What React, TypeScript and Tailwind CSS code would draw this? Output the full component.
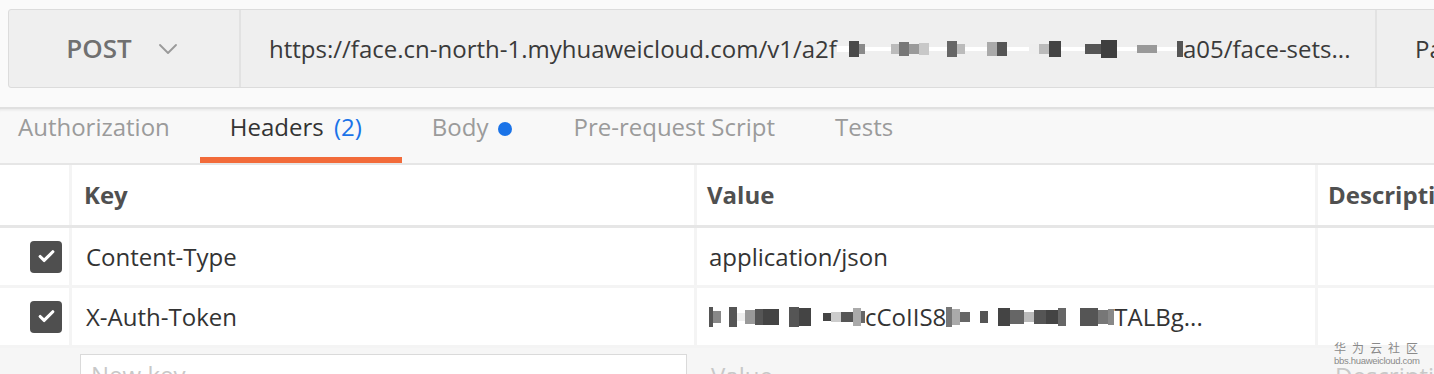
import { ChevronDown, Check } from 'lucide-react'

type Block = [number, string, number?]

// pixelated redaction blocks: [width, colour, height]
const URL_MASK: Block[] = [
  [12, '#fff', 6], [10, '#4a4a4a', 16], [6, '#8a8a8a', 10], [26, '#fff', 4], [8, '#bbb', 10], [10, '#777', 14], [10, '#9a9a9a', 10],
  [10, '#c8c8c8', 12], [18, '#fff', 4], [10, '#666', 16], [8, '#bbb', 10], [22, '#fff', 4], [10, '#aaa', 14], [10, '#555', 14],
  [22, '#fff', 4], [10, '#eee', 10], [10, '#bbb', 10], [12, '#444', 16], [24, '#fff', 4], [16, '#555', 10], [16, '#3f3f3f', 18],
  [20, '#fff', 4], [20, '#999', 8], [20, '#fff', 4], [6, '#555', 16],
]

const TOKEN_MASK: Block[] = [
  [4, '#555', 20], [8, '#888', 12], [8, '#fff', 4], [8, '#555', 20], [8, '#eee', 8], [10, '#999', 14], [8, '#555', 16],
  [16, '#444', 16], [10, '#fff', 4], [10, '#555', 20], [12, '#444', 18], [12, '#fff', 4], [8, '#444', 8], [10, '#ccc', 10],
  [12, '#555', 10], [8, '#aaa', 18], [4, '#666', 12],
]

const TOKEN_MASK2: Block[] = [
  [6, '#777', 20], [8, '#aaa', 16], [10, '#666', 10], [10, '#fff', 4], [8, '#555', 12], [10, '#fff', 4], [12, '#444', 18],
  [14, '#666', 14], [10, '#bbb', 10], [12, '#555', 14], [12, '#444', 14], [8, '#666', 18], [14, '#fff', 4], [18, '#555', 18],
  [10, '#777', 14], [6, '#888', 16],
]

function Mosaic({ blocks }: { blocks: Block[] }) {
  return (
    <span className="inline-flex items-center h-[22px] align-middle shrink-0">
      {blocks.map(([w, c, h], i) => (
        <span key={i} className="block" style={{ width: w, height: h ?? 14, background: c }} />
      ))}
    </span>
  )
}

function CheckBox() {
  return (
    <div className="w-[32px] h-[32px] rounded-[4px] bg-[#4f4f4f] flex items-center justify-center">
      <Check size={19} strokeWidth={4} className="text-white" />
    </div>
  )
}

export default function App() {
  return (
    <div className="w-[1434px] h-[374px] overflow-hidden bg-[#fafafa] text-[#333] font-['Open_Sans',sans-serif] relative">
      {/* request bar */}
      <div className="pt-[9px] pl-[8px] h-[107px]">
        <div className="flex h-[79px] w-[1480px] bg-[#efefef] border border-[#dcdcdc] rounded-[3px]">
          <div className="w-[232px] flex items-center justify-center gap-[20px] border-r-2 border-[#e2e2e2] shrink-0">
            <span className="text-[26px] font-semibold text-[#707070] ml-[2px]">POST</span>
            <ChevronDown size={32} strokeWidth={1.4} className="text-[#9a9a9a]" />
          </div>
          <div className="flex items-center pl-[28px] w-[1136px] border-r-2 border-[#e2e2e2] shrink-0 text-[24px] text-[#3a3a3a] whitespace-nowrap overflow-hidden">
            <span>https://face.cn-north-1.myhuaweicloud.com/v1/a2f</span>
            <Mosaic blocks={URL_MASK} />
            <span>a05/face-sets...</span>
          </div>
          <div className="flex items-center pl-[38px] text-[24px] text-[#3a3a3a]">Params</div>
        </div>
      </div>

      {/* tabs */}
      <div className="h-[56px] bg-[#f8f8f8] border-t-2 border-[#e0e0e0] shadow-[inset_0_3px_3px_-2px_rgba(0,0,0,0.08)] flex text-[24px] text-[#9b9b9b] whitespace-nowrap">
        <div className="pl-[18px] pr-[30px]">Authorization</div>
        <div className="w-[202px] pl-[30px] flex flex-col">
          <div className="text-[#333]">
            Headers <span className="text-[#1a73e8] ml-[4px]">(2)</span>
          </div>
          <div className="mt-auto ml-[-30px] h-[6px] bg-[#f26b3a]" />
        </div>
        <div className="pl-[30px] pr-[31px] flex items-start gap-[10px]">
          <span>Body</span>
          <span className="mt-[13px] w-[14px] h-[14px] rounded-full bg-[#1a73e8]" />
        </div>
        <div className="pl-[30px] pr-[30px]">Pre-request Script</div>
        <div className="pl-[30px]">Tests</div>
      </div>

      {/* table */}
      <div className="bg-white border-t-2 border-[#e6e6e6]">
        <div className="flex h-[63px] border-b-[3px] border-[#e6e6e6] text-[24px] font-bold text-[#505050] whitespace-nowrap">
          <div className="w-[72px] shrink-0 border-r-[3px] border-[#f4f4f4]" />
          <div className="w-[625px] shrink-0 pl-[12px] flex items-center border-r-[3px] border-[#f4f4f4]">Key</div>
          <div className="w-[621px] shrink-0 pl-[10px] flex items-center border-r-[3px] border-[#f4f4f4]">Value</div>
          <div className="shrink-0 pl-[10px] flex items-center">Description</div>
        </div>
        {[
          { k: 'Content-Type', v: <span>application/json</span> },
          {
            k: 'X-Auth-Token',
            v: (
              <span className="flex items-center whitespace-nowrap">
                <Mosaic blocks={TOKEN_MASK} />
                <span>cCoIIS8</span>
                <Mosaic blocks={TOKEN_MASK2} />
                <span>TALBg...</span>
              </span>
            ),
          },
        ].map((r, i) => (
          <div key={i} className="flex h-[60px] border-b-[3px] border-[#f4f4f4] text-[24px] text-[#333] whitespace-nowrap">
            <div className="w-[72px] shrink-0 border-r-[3px] border-[#f4f4f4] flex items-center justify-end pr-[7px]">
              <CheckBox />
            </div>
            <div className="w-[625px] shrink-0 pl-[14px] flex items-center border-r-[3px] border-[#f4f4f4]">{r.k}</div>
            <div className="w-[621px] shrink-0 pl-[12px] flex items-center border-r-[3px] border-[#f4f4f4] overflow-hidden">{r.v}</div>
            <div className="flex-1" />
          </div>
        ))}
        <div className="flex h-[40px] bg-[#f6f6f6] text-[24px] text-[#c8c8c8] whitespace-nowrap">
          <div className="w-[80px] shrink-0" />
          <div className="w-[607px] shrink-0 mt-[6px] bg-white border border-[#dadada] pl-[10px] pt-[2px]">New key</div>
          <div className="w-[632px] shrink-0 pl-[24px] pt-[10px]">Value</div>
          <div className="pl-[16px] pt-[10px]">Description</div>
        </div>
      </div>

      {/* watermark */}
      <div className="absolute right-[10px] bottom-[9px] flex flex-col items-start leading-none text-[#8a8a8a]">
        <span className="text-[12px] tracking-[6px] font-['Noto_Sans_CJK_SC',sans-serif]">华为云社区</span>
        <span className="text-[9.5px] mt-[2px] font-['Liberation_Sans',sans-serif] tracking-[-0.3px]">bbs.huaweicloud.com</span>
      </div>
    </div>
  )
}
